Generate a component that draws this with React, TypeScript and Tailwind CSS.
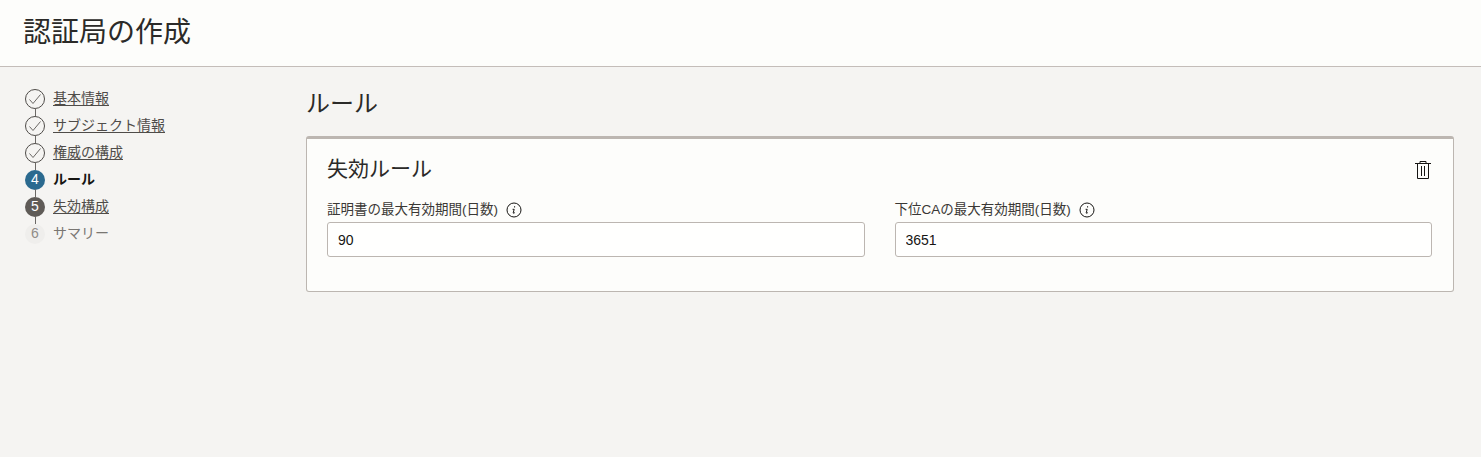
const steps = [
  { label: '基本情報', state: 'done' },
  { label: 'サブジェクト情報', state: 'done' },
  { label: '権威の構成', state: 'done' },
  { label: 'ルール', state: 'current', n: 4 },
  { label: '失効構成', state: 'visited', n: 5 },
  { label: 'サマリー', state: 'disabled', n: 6 },
]

function StepMark({ state, n }: { state: string; n?: number }) {
  if (state === 'done') {
    return (
      <div className="w-[20px] h-[20px] rounded-full border border-[#4f4c49] bg-[#f5f4f2] flex items-center justify-center shrink-0">
        <svg width="14" height="14" viewBox="0 0 14 14" fill="none" stroke="#6b6865" strokeWidth="1">
          <path d="M1.5 7.5l3.5 4L12.5 2.5" />
        </svg>
      </div>
    )
  }
  const color =
    state === 'current'
      ? 'bg-[#2b6a8f] text-white'
      : state === 'visited'
        ? 'bg-[#5f5b57] text-white'
        : 'bg-[#efeeec] text-[#8f8c88]'
  return (
    <div className={`w-[20px] h-[20px] rounded-full flex items-center justify-center shrink-0 text-[14px] ${color}`}>
      {n}
    </div>
  )
}

function Step({ label, state, n, last }: { label: string; state: string; n?: number; last: boolean }) {
  const text =
    state === 'current'
      ? 'font-bold text-[#161513]'
      : state === 'disabled'
        ? 'text-[#797672]'
        : 'text-[#4f4c49] underline underline-offset-2'
  return (
    <div className="relative flex items-center h-[27px] gap-[8px]">
      <StepMark state={state} n={n} />
      <span className={`text-[14px] leading-[20px] pb-[2px] ${text}`}>{label}</span>
      {!last && <div className="absolute left-[10px] top-[23px] w-px h-[8px] bg-[#6b6865]" />}
    </div>
  )
}

function InfoIcon() {
  return (
    <svg width="16" height="16" viewBox="0 0 16 16" fill="none" className="shrink-0">
      <circle cx="8" cy="8" r="7" stroke="#161513" strokeWidth="1" />
      <path d="M8.6 4.2v1.3M6.6 7.3h1.6L7.2 10.9c0 .6.9.4 1.6-.3" stroke="#161513" strokeWidth="1" />
    </svg>
  )
}

function Field({ label, value }: { label: string; value: string }) {
  return (
    <div className="flex-1 min-w-0">
      <div className="flex items-center gap-2 h-[20px] text-[13.5px] text-[#3a3835]">
        <span>{label}</span>
        <InfoIcon />
      </div>
      <input
        readOnly
        value={value}
        className="mt-[2px] block w-full h-[35px] px-[10px] bg-[#fffffe] border border-[#bcb6b1] rounded-[3px] text-[14px] text-[#161513] outline-none"
      />
    </div>
  )
}

export default function App() {
  return (
    <div className="h-[457px] bg-[#f5f4f2] overflow-hidden font-['Liberation_Sans','Noto_Sans_CJK_JP',sans-serif]">
      <header className="h-[67px] bg-[#fdfdfb] border-b border-[#c4bdb9] pl-[23px] flex items-center">
        <h1 className="text-[28px] font-normal text-[#2b2a28] pb-[1px]">認証局の作成</h1>
      </header>

      <div className="flex">
        <nav className="w-[306px] shrink-0 pl-[25px] pt-[18px]">
          {steps.map((s, i) => (
            <Step key={s.label} label={s.label} state={s.state} n={s.n} last={i === steps.length - 1} />
          ))}
        </nav>

        <main className="flex-1 pr-[27px]">
          <h2 className="mt-[21px] h-[32px] text-[24px] leading-[32px] font-normal text-[#2b2a28]">ルール</h2>
          <section className="mt-[16px] h-[156px] bg-[#fdfdfb] border border-[#bcb6b1] border-t-[3px] rounded-[3px] pl-[20px] pr-[21px]">
            <div className="flex items-start justify-between pt-[16px]">
              <h3 className="text-[21px] leading-[28px] font-normal text-[#2b2a28]">失効ルール</h3>
              <svg width="16" height="19" viewBox="0 0 16 19" fill="none" stroke="#161513" strokeWidth="1" className="mt-[5px] mr-[1px]">
                <path d="M0 3.5h16M5 3.5V1.5h6v2M2.5 3.5v15h11v-15M6.5 6v10M9.5 6v10" />
              </svg>
            </div>
            <div className="flex gap-[30px] mt-[17px]">
              <Field label="証明書の最大有効期間(日数)" value="90" />
              <Field label="下位CAの最大有効期間(日数)" value="3651" />
            </div>
          </section>
        </main>
      </div>
    </div>
  )
}
